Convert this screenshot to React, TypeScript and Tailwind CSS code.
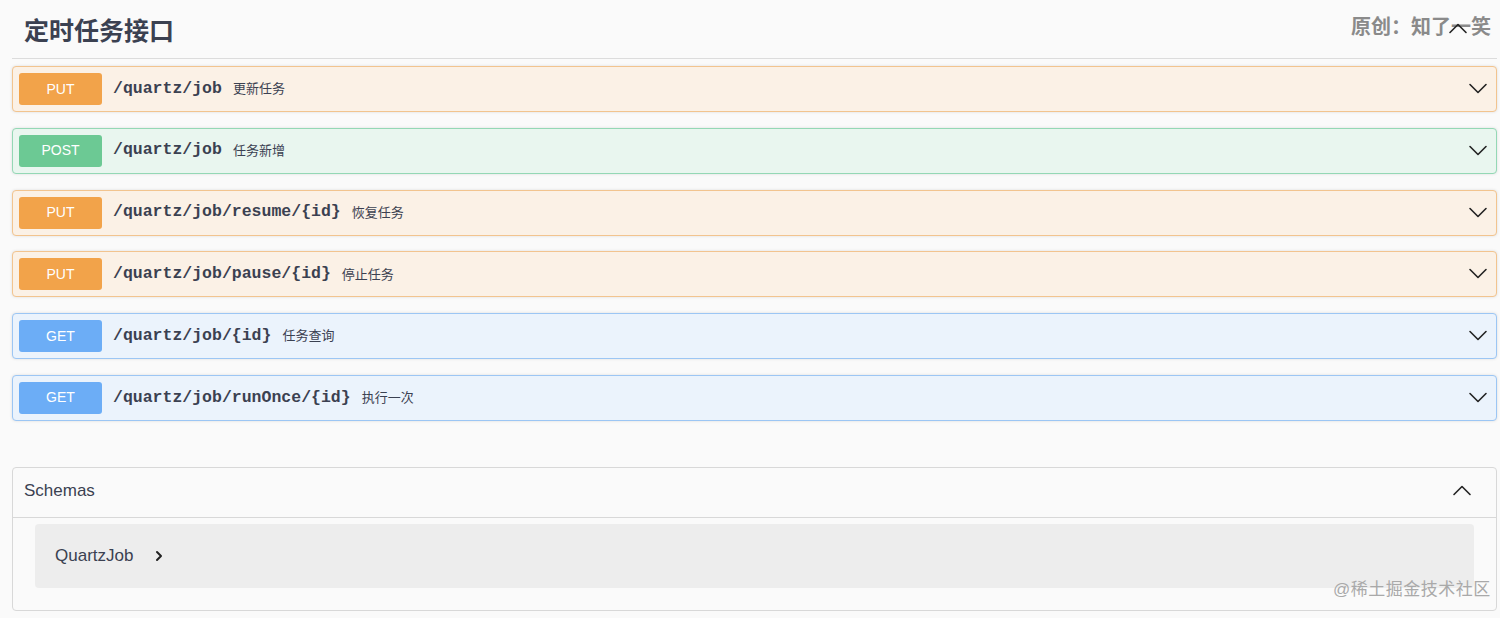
import { ChevronRight } from 'lucide-react'

type Op = { method: 'PUT' | 'POST' | 'GET'; path: string; desc: string }

const ops: Op[] = [
  { method: 'PUT', path: '/quartz/job', desc: '更新任务' },
  { method: 'POST', path: '/quartz/job', desc: '任务新增' },
  { method: 'PUT', path: '/quartz/job/resume/{id}', desc: '恢复任务' },
  { method: 'PUT', path: '/quartz/job/pause/{id}', desc: '停止任务' },
  { method: 'GET', path: '/quartz/job/{id}', desc: '任务查询' },
  { method: 'GET', path: '/quartz/job/runOnce/{id}', desc: '执行一次' },
]

const styles = {
  PUT: { row: 'bg-[#fbf1e6] border-[#f2c48f]', badge: 'bg-[#f2a34a]' },
  POST: { row: 'bg-[#e9f6ef] border-[#94d8b5]', badge: 'bg-[#6cc994]' },
  GET: { row: 'bg-[#ebf3fc] border-[#9cc6f4]', badge: 'bg-[#6cadf6]' },
}

const sans = 'font-["Liberation_Sans","Noto_Sans_CJK_SC",sans-serif]'

function Arrow({ up = false, className = '' }: { up?: boolean; className?: string }) {
  return (
    <svg width="20" height="12" viewBox="0 0 20 12" className={className} fill="none">
      <polyline
        points={up ? '2,10.5 10,2.5 18,10.5' : '2,1.5 10,9.5 18,1.5'}
        stroke="#222"
        strokeWidth="1.6"
        strokeLinecap="round"
        strokeLinejoin="round"
      />
    </svg>
  )
}

function OpRow({ op }: { op: Op }) {
  const s = styles[op.method]
  return (
    <div className={`flex items-center h-[46px] border rounded-[4px] pl-[6px] pr-[8px] shadow-[0_0_3px_rgba(0,0,0,0.12)] ${s.row}`}>
      <span
        className={`w-[83px] h-[32px] rounded-[3px] flex items-center justify-center text-white text-[14px] ${s.badge}`}
      >
        {op.method}
      </span>
      <span className='ml-[11px] font-["Liberation_Mono",monospace] font-bold text-[16.5px] text-[#3b4151]'>
        {op.path}
      </span>
      <span className="ml-[11px] text-[13px] text-[#3b4151]">{op.desc}</span>
      <Arrow className="ml-auto" />
    </div>
  )
}

export default function App() {
  return (
    <div className={`relative w-[1512px] h-[618px] bg-white overflow-hidden ${sans}`}>
      <div className="w-[1500px] h-full bg-[#fafafa] pl-[12px] pr-[3px]">
        {/* Tag header */}
        <div className="relative h-[59px] flex items-center pt-[6px] pl-[12px] border-b border-[#dcdcdc]">
          <h3 className="text-[25px] font-bold text-[#3b4151]">定时任务接口</h3>
          <span className="absolute right-[6px] top-[12px] text-[20px] font-bold text-[#8a8a8a]">原创：知了一笑</span>
          <Arrow up className="absolute right-[29px] top-[22px]" />
        </div>

        {/* Operations */}
        <div className="flex flex-col gap-[15.8px] mt-[7px]">
          {ops.map((op, i) => (
            <OpRow key={i} op={op} />
          ))}
        </div>

        {/* Schemas */}
        <div className="mt-[46px] h-[144px] border border-[#d8d8d8] rounded-[4px] bg-[#fafafa]">
          <div className="h-[50px] flex items-center pl-[11px] pr-[24px] border-b border-[#d8d8d8]">
            <span className="text-[17px] text-[#3b4151] -mt-[4px]">Schemas</span>
            <Arrow up className="ml-auto -mt-[4px]" />
          </div>
          <div className="mx-[22px] mt-[6px] h-[64px] rounded-[4px] bg-[#ededed] flex items-center pl-[20px]">
            <span className="text-[17px] text-[#3b4151]">QuartzJob</span>
            <ChevronRight size={16} strokeWidth={3} className="ml-[18px] text-[#222]" />
          </div>
        </div>
      </div>

      {/* Watermark */}
      <span className="absolute left-[1333px] top-[577px] text-[17px] text-[#a9a9a9] tracking-[0.5px]">@稀土掘金技术社区</span>
    </div>
  )
}
